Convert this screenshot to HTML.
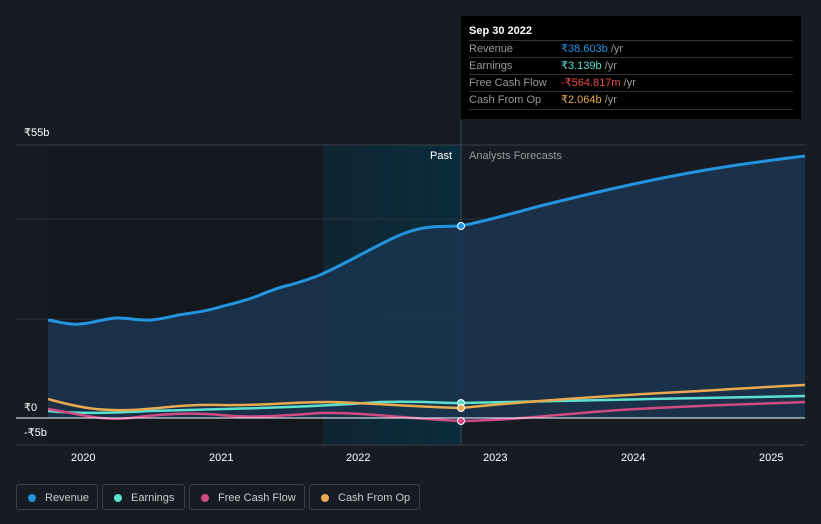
<!DOCTYPE html>
<html><head><meta charset="utf-8"><style>
body{margin:0;width:821px;height:524px;background:#161b24;font-family:"Liberation Sans",sans-serif;overflow:hidden;position:relative}
.tt{position:absolute;left:461px;top:16px;width:340px;height:103px;background:#000;color:#fff}
.tt .h{position:absolute;left:8px;top:9px;font-size:11px;font-weight:bold}
.tt .r{position:absolute;left:8px;width:324px;border-top:1px solid #333;height:17px;font-size:11px;color:#999;line-height:17px}
.tt .r span{position:absolute;left:92px}
.lg{position:absolute;top:484px;height:26px;border:1px solid #3a3f48;border-radius:3px;color:#ccc;font-size:11px;line-height:26px;box-sizing:border-box;padding-left:28px}
.lg i{position:absolute;left:11px;top:9px;width:8px;height:8px;border-radius:50%}
.ax{position:absolute;color:#fff;font-size:11px}
</style></head><body>
<svg width="821" height="524" style="position:absolute;left:0;top:0">
<defs><linearGradient id="hl" x1="0" x2="1"><stop offset="0" stop-color="#0f2530"/><stop offset="1" stop-color="#0a2c3c"/></linearGradient></defs>
<rect x="48" y="145" width="275" height="300" fill="#13171e"/>
<rect x="323" y="145" width="138" height="300" fill="url(#hl)"/>
<line x1="16" y1="145" x2="805" y2="145" stroke="#3a3f48"/>
<line x1="16" y1="219" x2="805" y2="219" stroke="#2a303a"/>
<line x1="16" y1="319" x2="805" y2="319" stroke="#2a303a"/>
<line x1="461" y1="120" x2="461" y2="445" stroke="#2d4a5a"/>
<path d="M48 320 C60 322,70 325,80 324 C95 323,105 318,118 318 C130 318,140 321,150 320 C165 319,175 315,185 314 C200 312,210 310,220 307 C235 303,248 300,260 295 C272 290,280 287,290 285 C300 282,310 279,320 275 C335 268,347 262,360 255 C375 247,388 240,400 235 C415 229,425 227,440 226.5 L461 226 C490 220,510 214,540 206 C600 191,660 178,700 171 C740 164,780 159,805 156 L805 418 L48 418Z" fill="#1b3550" opacity="0.85"/>
<path d="M48 320 C60 322,70 325,80 324 C95 323,105 318,118 318 C130 318,140 321,150 320 C165 319,175 315,185 314 C200 312,210 310,220 307 C235 303,248 300,260 295 C272 290,280 287,290 285 C300 282,310 279,320 275 C335 268,347 262,360 255 C375 247,388 240,400 235 C415 229,425 227,440 226.5 L461 226 C490 220,510 214,540 206 C600 191,660 178,700 171 C740 164,780 159,805 156" fill="none" stroke="#2394df" stroke-width="3"/>
<path d="M48 411 C80 414,110 413,150 411 C220 409,300 408,380 402 C420 401,440 403,461 403 C550 401,700 398,805 396" fill="none" stroke="#5de0cf" stroke-width="2.5"/>
<path d="M48 409 C80 414,100 421,130 418 C160 414,190 412,220 415 C250 418,280 416,320 413 C360 412,400 418,461 421 C520 420,560 414,620 410 C700 405,760 404,805 402" fill="none" stroke="#d14a86" stroke-width="2.5"/>
<path d="M48 399 C80 408,100 411,130 410 C160 409,180 404,220 405 C260 406,290 402,330 402 C370 403,420 407,461 408 C520 402,600 396,700 391 C750 388,780 386,805 385" fill="none" stroke="#e8a94f" stroke-width="2.5"/>
<line x1="16" y1="418" x2="805" y2="418" stroke="#fff"/>
<line x1="16" y1="445" x2="805" y2="445" stroke="#3a3f48"/>
<circle cx="461" cy="226" r="3.5" fill="#2394df" stroke="#fff"/>
<circle cx="461" cy="403" r="3.5" fill="#5de0cf" stroke="#fff"/>
<circle cx="461" cy="408" r="3.5" fill="#e8a94f" stroke="#fff"/>
<circle cx="461" cy="421" r="3.5" fill="#d14a86" stroke="#fff"/>
</svg>
<div class="ax" style="left:24px;top:126px">₹55b</div>
<div class="ax" style="left:24px;top:401px">₹0</div>
<div class="ax" style="left:24px;top:426px">-₹5b</div>
<div class="ax" style="left:430px;top:150px;color:#fff">Past</div>
<div class="ax" style="left:469px;top:150px;color:#999">Analysts Forecasts</div>
<div class="ax" style="left:71px;top:452px">2020</div>
<div class="ax" style="left:209px;top:452px">2021</div>
<div class="ax" style="left:346px;top:452px">2022</div>
<div class="ax" style="left:483px;top:452px">2023</div>
<div class="ax" style="left:621px;top:452px">2024</div>
<div class="ax" style="left:759px;top:452px">2025</div>
<div class="tt"><div class="h">Sep 30 2022</div>
<div class="r" style="top:24px">Revenue<span><b style="font-weight:normal;color:#2394df">₹38.603b</b> /yr</span></div>
<div class="r" style="top:41px">Earnings<span><b style="font-weight:normal;color:#5de0cf">₹3.139b</b> /yr</span></div>
<div class="r" style="top:58px">Free Cash Flow<span><b style="font-weight:normal;color:#e84b4b">-₹564.817m</b> /yr</span></div>
<div class="r" style="top:75px;border-bottom:1px solid #333">Cash From Op<span><b style="font-weight:normal;color:#e8a94f">₹2.064b</b> /yr</span></div>
</div>
<div class="lg" style="left:16px;width:82px"><i style="background:#2394df"></i>Revenue</div>
<div class="lg" style="left:102px;width:83px"><i style="background:#5de0cf"></i>Earnings</div>
<div class="lg" style="left:189px;width:116px"><i style="background:#d14a86"></i>Free Cash Flow</div>
<div class="lg" style="left:309px;width:111px"><i style="background:#e8a94f"></i>Cash From Op</div>
</body></html>
